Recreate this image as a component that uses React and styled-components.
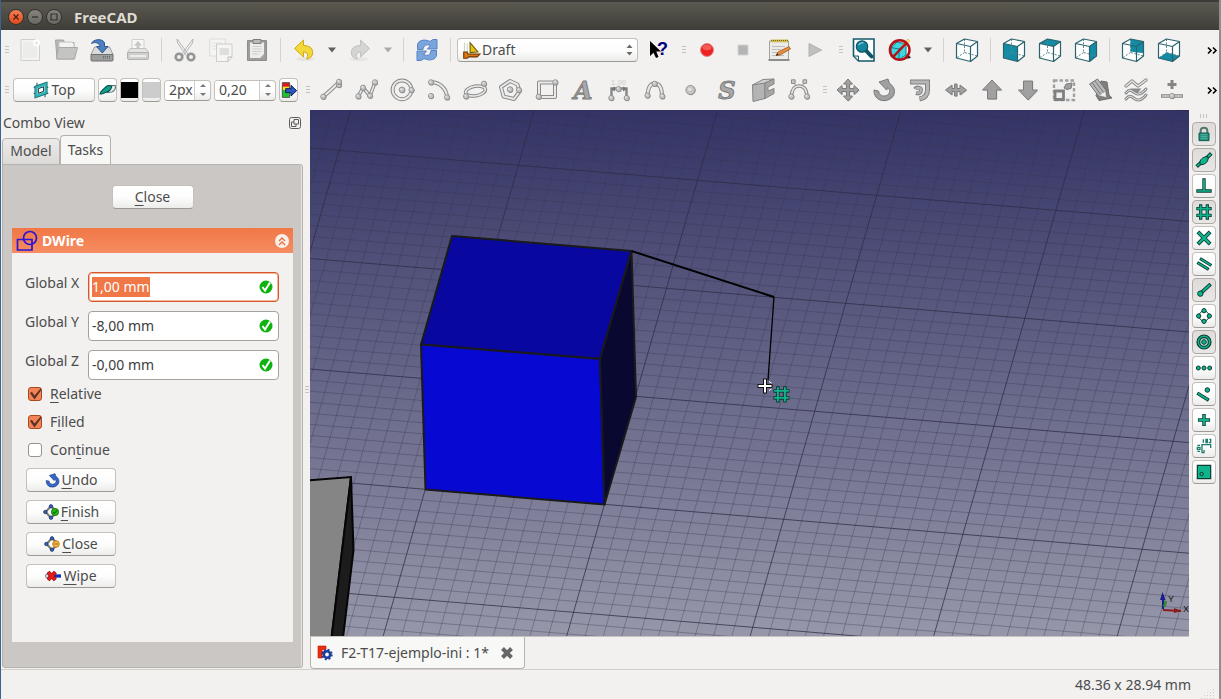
import React, { useEffect, useRef } from 'react'
import styled, { createGlobalStyle, css } from 'styled-components'

const GlobalStyle = createGlobalStyle`
* {
    box-sizing: border-box;
}
body {
    margin: 0;
    background: #f2f1f0;
    color: #4c4c4c;
    font-family: "Noto Sans", "Open Sans", sans-serif;
    font-size: 14px;
    line-height: 20px;
}
button, input, select {
    font: inherit;
    color: inherit;
    margin: 0;
    padding: 0;
}
svg {
    display: block;
    flex: none;
    overflow: visible;
}
u {
    text-underline-offset: 3px;
}
`

/* ---------- toolbar icons ---------- */

const Icon = ({ size = 24, children }) => (
  <svg width={size} height={size} viewBox="0 0 24 24" fill="none" aria-hidden="true">{children}</svg>
)

const Tube = ({ d, w = 4 }) => (
  <g strokeLinejoin="round" strokeLinecap="round">
    <path d={d} stroke="#8b8b8b" strokeWidth={w} />
    <path d={d} stroke="#e9e9e9" strokeWidth={w - 2} />
  </g>
)
const Node = ({ x, y, r = 2.6 }) => (
  <g>
    <circle cx={x + 0.5} cy={y + 0.6} r={r} fill="#8f8f8f" />
    <circle cx={x} cy={y} r={r} fill="#c3c3c3" stroke="#8a8a8a" strokeWidth="0.8" />
    <circle cx={x - 0.7} cy={y - 0.7} r={r / 2.6} fill="#e2e2e2" />
  </g>
)
const Solid = ({ d }) => (
  <g strokeLinejoin="round">
    <path d={d} transform="translate(0.8 0.8)" fill="#c4c4c4" />
    <path d={d} fill="#a0a0a0" stroke="#7c7c7c" />
  </g>
)

const LineIcon = () => <Icon><Tube d="M4.3 18.7 20 4.5" /><Node x={20} y={7} /><Node x={20} y={3.8} /><Node x={4.3} y={18.7} /></Icon>
const WireIcon = () => (
  <Icon>
    <Tube d="M3.3 18.3 8 9.7l7 8 5-13.4" w={3.6} />
    <Node x={3.3} y={18.3} /><Node x={8} y={9.7} /><Node x={15} y={17.7} /><Node x={20} y={4.3} />
  </Icon>
)
const CircleIcon = () => <Icon><Tube d="M1.6 11.8a9.4 9.4 0 1 0 18.8 0a9.4 9.4 0 1 0 -18.8 0" /><Node x={11} y={11.8} r={2.8} /><Node x={20.5} y={12} /></Icon>
const ArcIcon = () => <Icon><Tube d="M4 4.3C13 4 19.5 11 20 19" /><Node x={4} y={4.3} /><Node x={4} y={18} /><Node x={20} y={19.3} /></Icon>
const EllipseIcon = () => (
  <Icon>
    <g transform="rotate(-10 12.5 13)"><Tube d="M2.5 13a10 4.8 0 1 0 20 0a10 4.8 0 1 0 -20 0" w={3.6} /></g>
    <Node x={3} y={18.3} /><Node x={21} y={5.7} />
  </Icon>
)
const PolygonIcon = () => <Icon><Tube d="M11 3 2 9l2.6 9.5L15 21l5.5-7.5-2-7z" /><Node x={11} y={11.5} r={2.8} /><Node x={20} y={12} /></Icon>
const RectIcon = () => <Icon><Tube d="M4 4.5H20V19H4z" /><Node x={20.3} y={4.3} /><Node x={3.7} y={18.7} /></Icon>

const GlyphText = styled.text`
font-family: "DejaVu Serif", serif;
font-weight: bold;
font-style: italic;
font-size: 24px;
`
const TinyText = styled.text`
font-family: "Liberation Sans", sans-serif;
font-weight: bold;
font-size: ${p => p.$size || 8}px;
`
const LetterIcon = ({ letter }) => (
  <Icon>
    <GlyphText x="12" y="21" textAnchor="middle" fill="#a8a8a8" stroke="#7c7c7c">{letter}</GlyphText>
  </Icon>
)
const DimIcon = () => (
  <Icon>
    <path d="M4.5 20v-9.5H19.5V20" stroke="#858585" strokeWidth="2.4" />
    <path d="m4 11 4-2.5v5zM20 11l-4-2.5v5z" fill="#777" />
    <TinyText x="11.5" y="7" textAnchor="middle" fill="#d8d8d8">1.00</TinyText>
    <Node x={11.5} y={11} /><Node x={4.3} y={20} /><Node x={19.7} y={20} />
  </Icon>
)
const SplineIcon = () => <Icon><Tube d="M4.5 17.5C5 7 9 5.500 11.7 5.500S19 7 19 18" /><Node x={4.5} y={17.5} /><Node x={11.7} y={5.8} /><Node x={19.3} y={18.3} /></Icon>
const PointIcon = () => <Icon><Node x={11.5} y={12} r={4.6} /></Icon>
const FacebinderIcon = () => (
  <Icon>
    <path d="M1.500 7 14 3v17.500L2 23.500z" fill="#b4b4b4" stroke="#858585" />
    <path d="M1.500 7 12 1.500 23 1l-9 4z" fill="#cfcfcf" stroke="#858585" />
    <path d="M14 5 23 1v5l-6 3v4l6-2.500v5l-9 5z" fill="#a6a6a6" stroke="#858585" strokeLinejoin="round" />
  </Icon>
)
const BezierIcon = () => (
  <Icon>
    <path d="M6.300 3.500 9 8M17.700 3.500 15 8" stroke="#999" />
    <Tube d="M4.300 18C5 10 8 8 12 8s7.500 2 8 10" w={3.6} />
    <path d="M4.500 1.800h3.600v3.600H4.500zM16 1.800h3.600v3.600H16z" fill="#c9c9c9" stroke="#8a8a8a" />
    <Node x={4.3} y={18.5} /><Node x={20} y={18.5} />
  </Icon>
)
const MoveIcon = () => <Icon><Solid d="m12 1 4.500 5h-3v4.500H18v-3l5 4.500-5 4.500v-3h-4.500V18h3L12 23l-4.500-5h3v-4.500H6v3L1 12l5-4.500v3h4.500V6h-3z" /></Icon>
const TURN = 'M7 4 16 1l1.500 4.500C22 8 23.500 13 21.500 17 18 23.500 8 24.500 4 19 2.500 17 1.800 14.500 2 12l4.500 1c.5 4 4.500 6 8 4.500 4-1.700 4-6 1-8L14.500 12z'
const RotateIcon = () => <Icon><Solid d={TURN} /></Icon>
const OffsetIcon = () => (
  <Icon>
    <path d="M2 4h17.500V12c0 5-3 8-8 9" stroke="#808080" strokeWidth="5" />
    <path d="M7 11c1-2 6-2 6 1 0 2.500-2 4-5 3" stroke="#808080" strokeWidth="4" />
    <path d="M2.800 4h16.700V12c0 5-3 7.800-7.400 8.800" stroke="#b6b6b6" strokeWidth="3" />
    <path d="M7.500 10.800c1-1.600 5.500-1.500 5.500 1.200 0 2.300-2 3.700-4.400 3" stroke="#b6b6b6" strokeWidth="2" />
  </Icon>
)
const TrimexIcon = () => <Icon><Solid d="M1.500 12 8 7v3.500h2.500V6H13v4.500h3V7l6.500 5-6.500 5v-3.500h-3V18h-2.500v-4.500H8V17z" /></Icon>
const UpIcon = () => <Icon><Solid d="m12 2 9.500 10h-5v9h-9v-9h-5z" /></Icon>
const DownIcon = () => <Icon><Solid d="m12 22 9.500-10h-5V3h-9v9h-5z" /></Icon>
const ScaleIcon = () => (
  <Icon>
    <path d="M2 2.500h20V22H2z" stroke="#a0a0a0" strokeWidth="2.400" strokeDasharray="3.500 2" />
    <path d="M3 13h8.500v8.500H3z" fill="#ececec" stroke="#808080" strokeWidth="2.800" />
    <Solid d="m12 10 2-4 6-1-1 5-4 1.500z" />
  </Icon>
)
const EditIcon = () => (
  <Icon>
    <path d="M13 3l6 1 2 13 3 3-13 2.500-3-5z" fill="#808080" stroke="#6f6f6f" strokeLinejoin="round" />
    <path d="M1.500 6 9.500 1l9 12v6.500L10.500 18z" fill="#b8b8b8" stroke="#777" />
    <path d="m4 4.500 9 12.500M7 3l9 12" stroke="#777" />
    <path d="m10.500 17.500 7-4.500 1 6.500z" fill="#efefef" stroke="#888" strokeWidth="0.600" />
  </Icon>
)
const WireSplineIcon = () => (
  <Icon>
    <Tube d="m2 8 6-5 6 5 8-6" w={3.4} />
    <path d="M6.500 10.500h11L12 17z" fill="#8a8a8a" />
    <Tube d="M2 15c4-5 6-2 9 0s7 1 11-4M2 21c4-5 6-2 9 0s7 1 11-4" w={3} />
  </Icon>
)
const AddPointIcon = () => (
  <Icon>
    <path d="M12 2v9M7.500 6.500h9" stroke="#858585" strokeWidth="3" />
    <path d="M1 18h22" stroke="#8b8b8b" strokeWidth="3.600" />
    <path d="M2 18h20" stroke="#d5d5d5" strokeWidth="1.400" />
    <Node x={12} y={18} />
  </Icon>
)

const NewIcon = () => (
  <Icon>
    <path d="M3 1.500h14l4.500 4V22.500H3z" fill="#f3f3f2" stroke="#cfcfcd" />
    <path d="M5 4h11l3 3v13H5z" fill="#ececea" />
    <circle cx="18.500" cy="5" r="3.500" fill="#fff" /><circle cx="18.500" cy="5" r="1.500" fill="#e4e4e2" />
  </Icon>
)
const OpenIcon = () => (
  <Icon>
    <path d="M1.500 2h8l1 2.500H20V21H3z" fill="#b7b7b6" stroke="#a5a5a4" />
    <path d="M5 4h13l2 2v8H5z" fill="#f4f4f4" stroke="#c4c4c4" />
    <path d="M4.500 9.500h19L20.500 21H2.500z" fill="#c4c4c3" stroke="#a9a9a8" strokeLinejoin="round" />
  </Icon>
)
const SaveIcon = () => (
  <Icon>
    <path d="M4.500 9h15L23 16.500H1z" fill="#dcdcdc" stroke="#9b9b9b" />
    <path d="M1 16.500h22v5.500a1 1 0 0 1-1 1H2a1 1 0 0 1-1-1z" fill="#9d9f9f" stroke="#6e7070" />
    <path d="M13 20h8M13 18.500h8" stroke="#666" strokeDasharray="1 1" />
    <path d="M1.500 5.500C3 1 13 0 14.500 5v3.500H18L12.300 15 6.500 8.500H10C9.500 5 5 3.500 1.500 5.500z" fill="#4d7fbf" stroke="#2c5a98" />
  </Icon>
)
const PrintIcon = () => (
  <Icon>
    <path d="M6 1.500h12V13H6z" fill="#f7f7f6" stroke="#cfcfce" />
    <path d="m12 3 4 4.500h-2.500V11h-3V7.500H8z" fill="#c6c6c5" />
    <path d="M4 10.500h16l2.500 4H1.500z" fill="#e3e3e2" stroke="#c2c2c1" />
    <path d="M1.500 14.500h21v5.500a1.500 1.500 0 0 1-1.500 1.500H3A1.500 1.500 0 0 1 1.500 20z" fill="#cfcfce" stroke="#b1b1b0" />
    <path d="M4 18h16" stroke="#f5f5f5" strokeWidth="1.600" />
  </Icon>
)
const CutIcon = () => (
  <Icon>
    <path d="M4 1 15.500 16.500l-2 1L4.500 5zM20 1 8.500 16.500l2 1L19.500 5z" fill="#f1f1f1" stroke="#b5b5b5" />
    <circle cx="6" cy="19" r="3.300" stroke="#959595" strokeWidth="2.600" />
    <circle cx="18" cy="19" r="3.300" stroke="#959595" strokeWidth="2.600" />
  </Icon>
)
const CopyIcon = () => (
  <Icon>
    <path d="M.8 1h15.500v17H.8z" fill="#f5f5f4" stroke="#dbdbd9" />
    <path d="M3 5h10M3 8h4M3 11h4" stroke="#e0e0de" />
    <path d="M7.500 6H23v13l-4 4.500H7.500z" fill="#f5f5f4" stroke="#cdcdcb" />
    <path d="M10.500 10h9.500v7h-9.500z" fill="#dededc" /><path d="M19 23.500V19h4" stroke="#bbb" />
  </Icon>
)
const PasteIcon = () => (
  <Icon>
    <path d="M2.500 2.500h19v20h-19z" fill="#9d9d9c" stroke="#8d8d8c" strokeLinejoin="round" />
    <path d="M5 4.500h14v15.500H5z" fill="#ececeb" />
    <path d="M7.500 8.500h9M7.500 11h9M7.500 13.500h9M7.500 16h6" stroke="#cfcfce" />
    <path d="M8 1.500h8v4H8z" fill="#b9b9b8" stroke="#7d7d7c" />
    <path d="M19 16v4h-4z" fill="#a4a4a3" />
  </Icon>
)
const UndoIcon = () => (
  <Icon>
    <ellipse cx="13" cy="21" rx="9" ry="2" fill="#e6e5e3" />
    <path d="M11.500 2v5.500c7 0 10 4 9 8.500-.6 3-3 4.800-6 5 2.500-4 1-7-3-7v5L2.500 10.500z" fill="#f3d73b" stroke="#d0a90c" strokeLinejoin="round" />
  </Icon>
)
const RedoIcon = () => (
  <Icon>
    <ellipse cx="11" cy="21" rx="9" ry="2" fill="#e6e5e3" />
    <path d="M12.500 2v5.500c-7 0-10 4-9 8.500.6 3 3 4.800 6 5-2.500-4-1-7 3-7v5L21.500 10.500z" fill="#d5d5d4" stroke="#c0c0bf" strokeLinejoin="round" />
  </Icon>
)
const RefreshIcon = () => (
  <Icon>
    <path d="M2.500 11.500V7C3 2.500 9 .5 15 3.500L18 1.500h4v9.500h-9.500l3-3.500C11 5.500 8.500 8 8 11.500z" fill="#7ba6dd" stroke="#5583c4" strokeLinejoin="round" />
    <path d="M21.500 12.500V17c-.5 4.500-6.500 6.500-12.500 3.500L6 22.500H2V13h9.500l-3 3.500c4.500 2 7 .500 7.500-4z" fill="#7ba6dd" stroke="#5583c4" strokeLinejoin="round" />
  </Icon>
)
const WhatsThisIcon = () => (
  <Icon>
    <path d="M4 3v15l3.500-3.300L10 20l2.500-1-2.200-5.500h4.700z" fill="#000" />
    <TinyText x="11" y="17" $size={18} fill="#00007c">?</TinyText>
  </Icon>
)
const RecordIcon = () => (
  <Icon>
    <circle cx="12" cy="12" r="6.500" fill="#ef2020" stroke="#d98d8d" />
    <ellipse cx="12" cy="9.500" rx="4.500" ry="2.800" fill="#f65a55" />
  </Icon>
)
const StopIcon = () => <Icon><path d="M7 7h10v10H7z" fill="#b4b4b4" stroke="#d3d3d3" /></Icon>
const MacroIcon = () => (
  <Icon>
    <path d="M2.500 3h19v19h-19z" fill="#ebebe9" stroke="#a3a39e" />
    <path d="M1.500 21h21v2h-21z" fill="#8e8e88" />
    <path d="M4 1.500h17v2.800H4z" fill="#cdbb4f" /><path d="M4 2.500h17" stroke="#7b6d1b" strokeDasharray="1 1" />
    <path d="M5 8.500h13M5 11.500h9M5 14.500h6M5 17.500h12" stroke="#bcbcb8" />
    <path d="M9 17.500 11 14l11-5.500 1.500 2.500-10.500 6z" fill="#ea8d3c" stroke="#8a4f1b" strokeWidth="0.700" />
    <path d="m9 17.500 1.200-2.200 1.500 1.700z" fill="#222" />
  </Icon>
)
const PlayIcon = () => <Icon><path d="M6 5.500 18.500 12 6 18.500z" fill="#c0c0c0" stroke="#b0b0b0" /></Icon>
const FitIcon = () => (
  <Icon>
    <path d="M1.500 1h20.500v22H6.500l-5-5z" fill="#fff" stroke="#14596b" strokeWidth="1.600" />
    <path d="M1.500 18h5v5z" fill="#dce8ea" stroke="#14596b" />
    <path d="m13.500 12 6 6.500" stroke="#0f5567" strokeWidth="4" strokeLinecap="round" />
    <circle cx="10" cy="8.500" r="5.700" fill="#1586a0" stroke="#0f5567" strokeWidth="1.200" />
    <path d="M6.500 7c1.500-2 3.500-2.500 5-2" stroke="#7fc4d3" strokeWidth="1.500" />
  </Icon>
)
const DrawStyleIcon = () => (
  <Icon>
    <path d="m16 21 7-1-3-4z" fill="#222" />
    <path d="M3 9.500 9 4l9 2v11l-7 4.500-8-3z" fill="#3fd7df" stroke="#117a86" />
    <path d="m3 9.500 8 1.500 7-5M11 11v10" stroke="#117a86" />
    <path d="m13 9 7-8 2 2-7 7z" fill="#ffe97a" stroke="#d7a13c" strokeWidth="0.600" />
    <circle cx="11.700" cy="12" r="9.800" stroke="#b41218" strokeWidth="2.500" />
    <path d="M18.500 5 5 19" stroke="#b41218" strokeWidth="2.500" />
  </Icon>
)
const faces = {
  front: 'M1.500 5.500 15.500 8.500v15L1.500 20z',
  top: 'M1.500 5.500 9.500 1l13 2.500-7 5z',
  right: 'M15.500 8.500 22.500 3.500V18l-7 5.500z',
  rear: 'M9.500 1l13 2.500V15l-7-.5-6-1z',
  bottom: 'M1.500 20 9.500 14.500l13 3.500-7 5.500z',
}
const CubeIcon = ({ face }) => (
  <Icon>
    <path d="M1.500 5.500 9.500 1l13 2.500V18l-7 5.500L1.500 20z" fill="#fff" />
    {face && <path d={faces[face]} fill="#128ba5" />}
    <path d="M9.500 1v13.500l13 3.500M9.500 14.500 1.500 20" stroke="#5b8790" strokeDasharray="2 1.500" />
    <path d="M1.500 5.500 9.500 1l13 2.500V18l-7 5.500L1.500 20zM1.500 5.500l14 3 7-5M15.500 8.500v15" stroke="#2b626c" strokeWidth="1.200" strokeLinejoin="round" />
  </Icon>
)

/* ---------- small widget icons ---------- */

const PlaneIcon = () => (
  <Icon size={16}>
    <path d="M1 8h22M1 17h22M6 1v22M18 1v22" stroke="#2a5559" strokeWidth="1.500" />
    <path d="M5 8 19 3v13L5 21z" fill="#fff" stroke="#0f4d52" strokeWidth="5.500" />
    <path d="M5 8 19 3v13L5 21z" fill="#fff" stroke="#25b5bb" strokeWidth="3.500" />
    <path d="M8 10 16 7v7l-8 3z" fill="#fff" stroke="#0c2c2f" strokeWidth="1.500" />
  </Icon>
)
const ConstructionIcon = () => (
  <Icon size={17}>
    <path d="M12 15 18 5h5c1 4-1 8-5 9z" fill="#e8eeee" stroke="#5a7672" strokeWidth="1.500" />
    <path d="M1.500 17C2 12 8 9 10 6.500c2-2 7-2 8 0-1 4-4 7-8 8-3 .5-3 3-8.500 2.500z" fill="#10a08d" stroke="#0a4a43" strokeWidth="1.500" />
  </Icon>
)
const ApplyIcon = () => (
  <Icon size={16}>
    <path d="M2 1h11v8H2z" fill="#e01a1a" /><path d="M2 7h11v6H2z" fill="#f2e21c" />
    <path d="M2 12h11v11H2z" fill="#19c828" /><path d="M2 1h11v22H2z" stroke="#555" strokeWidth="1.500" />
    <path d="M7 10h8V5l8.500 8-8.500 8v-5H7z" fill="#2c57bf" stroke="#0c1f59" strokeWidth="1.500" />
  </Icon>
)
const BoatIcon = () => (
  <Icon size={17}>
    <path d="M2 1v17M6 2v16" stroke="#b9b9a4" /><path d="M10 15V1l11 13z" fill="#e8c311" stroke="#6d5a05" strokeWidth="1.500" />
    <path d="M1 14h5l1 3h17l-4 4H8l-2 2H1z" fill="#d9780f" stroke="#6a3704" strokeWidth="1.500" />
  </Icon>
)
const SortArrows = () => (
  <svg width="7" height="12" viewBox="0 0 7 12" aria-hidden="true"><path d="m.5 4 3-3.500 3 3.500zM.5 8l3 3.500 3-3.500z" fill="#6a6a6a" /></svg>
)
const Caret = ({ up, color = '#7a7a7a' }) => (
  <svg width="6" height="3" viewBox="0 0 6 3" aria-hidden="true"><path d={up ? 'M0 3 3 0l3 3z' : 'M0 0h6L3 3z'} fill={color} /></svg>
)
const DropCaret = ({ dim }) => (
  <svg width="8" height="6" viewBox="0 0 8 6" aria-hidden="true"><path d="M0 .5h8L4 5.500z" fill={dim ? '#aaa' : '#606060'} /></svg>
)
const ValidIcon = () => (
  <svg width="14" height="14" viewBox="0 0 14 14" fill="none" aria-hidden="true">
    <circle cx="7" cy="7" r="6.500" fill="#0fb20f" />
    <path d="m3.500 7 2.500 3.500 5-8" stroke="#fff" strokeWidth="2" />
  </svg>
)
const SketchIcon = () => (
  <svg width="22" height="22" viewBox="0 0 22 22" fill="none" stroke="#2a16d8" strokeWidth="1.700" aria-hidden="true">
    <path d="M1.500 9.500H16V20H1.500z" /><circle cx="14" cy="8" r="6.500" />
  </svg>
)
const CollapseIcon = () => (
  <svg width="14" height="14" viewBox="0 0 14 14" fill="none" aria-hidden="true">
    <circle cx="7" cy="7" r="7" fill="#f7efe9" /><path d="m4 7 3-3 3 3M4 11l3-3 3 3" stroke="#e8713f" strokeWidth="1.400" />
  </svg>
)
const FloatIcon = () => (
  <svg width="12" height="12" viewBox="0 0 12 12" fill="none" stroke="#5c5c5c" aria-hidden="true">
    <rect x=".5" y=".5" width="11" height="11" rx="2" /><path d="M5 2.500h4.500V7H5zM7 7v2.500H2.500V5H5" />
  </svg>
)
const UndoBlueIcon = () => <Icon size={15}><path d={TURN} fill="#3568cf" stroke="#12306f" strokeLinejoin="round" /></Icon>
const NodesBase = () => (
  <g>
    <path d="M12 3 4 12l8 9M12 3l7 7M12 21l7-7" stroke="#777" strokeWidth="3" />
    <g fill="#3463c4" stroke="#0d2356"><circle cx="12" cy="3.500" r="2.600" /><circle cx="3.500" cy="12" r="2.600" /><circle cx="12" cy="20.500" r="2.600" /></g>
  </g>
)
const FinishIcon = () => <Icon size={16}><NodesBase /><circle cx="18" cy="12" r="5.500" fill="#22b813" stroke="#0c6105" /><path d="m15 12 2 2.500 4-5" stroke="#0b4a06" strokeWidth="1.500" /></Icon>
const CloseWireIcon = () => <Icon size={16}><NodesBase /><circle cx="18" cy="12" r="5" fill="#ffd98a" stroke="#8a5200" /><circle cx="18" cy="12" r="3.800" stroke="#ef9412" strokeWidth="2" /><path d="M15.500 12h5" stroke="#7a4800" strokeWidth="1.500" /></Icon>
const WipeIcon = () => (
  <Icon size={16}>
    <path d="M9 12h15" stroke="#1431b5" strokeWidth="5" /><circle cx="3" cy="12" r="2.500" fill="#ddd" stroke="#555" />
    <path d="m4.500 6 11 12M15.500 6l-11 12" stroke="#8e0d0d" strokeWidth="6" />
    <path d="m5 6.500 10 11M15 6.500l-10 11" stroke="#ee1b1b" strokeWidth="4" />
  </Icon>
)
const AppIcon = () => (
  <svg width="16" height="16" viewBox="0 0 16 16" fill="none" aria-hidden="true">
    <path d="M1 1h8v3.500H5V6.500h3V9H5v4H1z" fill="#ef2b0b" stroke="#b41c04" strokeWidth="0.600" />
    <circle cx="10" cy="9.500" r="3.200" stroke="#1d3c9c" strokeWidth="2.600" />
    <circle cx="10" cy="9.500" r="4.900" stroke="#1d3c9c" strokeWidth="1.600" strokeDasharray="2 1.850" />
  </svg>
)
const TabCloseIcon = () => (
  <svg width="14" height="14" viewBox="0 0 14 14" aria-hidden="true"><path d="m2.500 2.500 9 9M11.500 2.500l-9 9" stroke="#666" strokeWidth="4" /></svg>
)
const Overflow = () => (
  <svg width="10" height="7" viewBox="0 0 10 7" fill="none" stroke="#000" strokeWidth="1.600" aria-hidden="true"><path d="m1 .5 3 3-3 3M6 .5l3 3-3 3" /></svg>
)

/* ---------- snap icons: dark outline under a green stroke ---------- */

const Snap = ({ d, w = 4 }) => (
  <g strokeLinecap="square" strokeLinejoin="miter">
    <path d={d} stroke="#0b3b33" strokeWidth={w + 2.4} />
    <path d={d} stroke="#10b48c" strokeWidth={w} />
  </g>
)
const Dot = ({ x, y, r = 3 }) => <circle cx={x} cy={y} r={r} fill="#10b48c" stroke="#0b3b33" strokeWidth="1.500" />
const GRID = 'M7 3v18M17 3v18M3 7h18M3 17h18'

const snaps = [
  { name: 'Toggle snap', on: true, art: <g><path d="M7 11V7c0-6 10-6 10 0v4" stroke="#56756f" strokeWidth="3" /><path d="M4.500 10.500h15V22h-15z" fill="#1c8f78" stroke="#14584d" strokeWidth="1.500" /><path d="M7 13h10M7 16h10M7 19h10" stroke="#7fc4b5" /></g> },
  { name: 'Near', on: true, art: <g><Snap d="M3 20 7 16M17 8l4-4" w={3} /><path d="M6 16c0-5 4-8 9-9h3v3c0 5-4 8-9 9H6z" fill="#10b48c" stroke="#0b3b33" strokeWidth="1.500" /></g> },
  { name: 'Perpendicular', art: <Snap d="M12 3v16M3 19.500h18" w={2.6} /> },
  { name: 'Grid', on: true, art: <Snap d={GRID} w={2.6} /> },
  { name: 'Intersection', art: <Snap d="m5 5 14 14M19 5 5 19" w={3.6} /> },
  { name: 'Parallel', art: <Snap d="m4 11 13 8M8 5l13 8" w={2.4} /> },
  { name: 'Endpoint', on: true, art: <g><Snap d="M8 16 20 5" w={3} /><Dot x={6.5} y={17.5} r={4} /></g> },
  { name: 'Angle', art: <g><circle cx="12" cy="12" r="7.500" stroke="#0b3b33" strokeWidth="1.500" /><Dot x={12} y={4} r={3.2} /><Dot x={4} y={12} r={3.2} /><Dot x={20} y={12} r={3.2} /><Dot x={12} y={20} r={3.2} /></g> },
  { name: 'Center', on: true, art: <g><circle cx="12" cy="12" r="10.500" fill="#10b48c" stroke="#0b3b33" strokeWidth="1.800" /><circle cx="12" cy="12" r="6.500" fill="#cfe5e0" stroke="#0b3b33" strokeWidth="1.800" /><Dot x={12} y={12} r={3.5} /></g> },
  { name: 'Extension', art: <g><Dot x={3.5} y={12} /><Dot x={12} y={12} /><Dot x={20.5} y={12} /></g> },
  { name: 'Midpoint', art: <g><Snap d="m4 12 13 8" w={2.6} /><Dot x={17} y={6} r={3.4} /></g> },
  { name: 'Ortho', art: <Snap d="M12 5.500v13M5.500 12h13" w={2.8} /> },
  { name: 'Dimensions', art: <g stroke="#1f7c6b" strokeWidth="2"><path d="M9 21V10h13v5M12 21v-3M9 10v12h4" /><path d="M11 2v5M15 2h2v5h-2zM20 2h2v5h-3M2 11h4M2 14h4v3H2zM2 20h4" /></g> },
  { name: 'Working plane', art: <g><path d="M2 2h20v20H2z" fill="#10b48c" stroke="#0b3b33" strokeWidth="1.800" /><circle cx="8.500" cy="15" r="2.600" stroke="#0b3b33" strokeWidth="1.500" /></g> },
]

/* ---------- layout ---------- */

const raised = css`
background: linear-gradient(#ffffff, #fdfdfd 50%, #ececeb);
border: 1px solid #c4c0bc;
border-bottom-color: #9d9995;
border-radius: 4px;
`
const Window = styled.div`
min-height: 100vh;
display: flex;
flex-direction: column;
border-left: 1px solid #39648f;
border-right: 2px solid #8f8e8c;
`
const TitleBar = styled.header`
display: flex;
align-items: center;
gap: 3px;
height: 30px;
padding: 3px 7px 0;
background: linear-gradient(#3c3b37 2px, #5b5950 2px, #3e3d38);
`
const WindowButton = styled.button`
display: grid;
place-items: center;
width: 16px;
height: 16px;
border: 1px solid #33322d;
border-radius: 50%;
background: ${p => p.$close ? 'linear-gradient(#f37e56, #de4b1d)' : 'linear-gradient(#85837b, #6a6860)'};
`
const AppTitle = styled.h1`
margin: 0 0 0 9px;
font-size: 15px;
line-height: 20px;
font-weight: bold;
color: #dfdbd2;
`
const ToolRow = styled.div`
display: flex;
align-items: center;
gap: 2px;
height: 40px;
`
const ToolGroup = styled.div`
display: flex;
align-items: center;
`
const Handle = styled.span`
flex: none;
width: 4px;
height: 8px;
margin: 0 3px 0 4px;
background: repeating-linear-gradient(#c6c3bf 0 1px, transparent 1px 3px);
`
const ToolButton = styled.button`
display: grid;
place-items: center;
width: 36px;
height: 36px;
border: none;
background: none;
`
const DropButton = styled(ToolButton)`
width: 20px;
`
const Separator = styled.span`
width: 1px;
height: 24px;
margin: 0 5px;
background: #d6d3cf;
`
const OverflowButton = styled(ToolButton)`
width: 14px;
margin-left: auto;
`
const Workbench = styled.label`
${raised}
display: flex;
align-items: center;
width: 181px;
height: 24px;
margin: 0 2px 0 1px;
padding: 0 4px 0 5px;
select {
    flex: 1;
    min-width: 0;
    padding-left: 2px;
    border: none;
    background: none;
    appearance: none;
    line-height: 20px;
}
`
const DraftControls = styled.div`
display: flex;
align-items: center;
gap: 3px;
padding: 0 2px 0 1px;
`
const PlaneButton = styled.button`
${raised}
display: flex;
align-items: center;
justify-content: center;
gap: 3px;
width: 82px;
height: 24px;
line-height: 20px;
`
const SmallButton = styled.button`
${raised}
display: grid;
place-items: center;
width: 19px;
height: 24px;
`
const Swatch = styled.span`
width: 17px;
height: 16px;
background: ${p => p.$color};
`
const Spin = styled.div`
${raised}
display: flex;
width: ${p => p.$width}px;
height: 21px;
overflow: hidden;
input {
    flex: 1;
    min-width: 0;
    padding-left: 4px;
    border: none;
    border-right: 1px solid #d0cdc9;
    background: #fff;
    line-height: 18px;
    outline: none;
}
`
const Steps = styled.div`
display: flex;
flex-direction: column;
width: 15px;
button {
    flex: 1;
    display: grid;
    place-items: center;
    border: none;
    background: none;
}
`
const Main = styled.main`
flex: 1;
display: flex;
min-height: 0;
`
const Dock = styled.aside`
display: flex;
flex-direction: column;
width: 303px;
padding: 0 1px 1px;
`
const DockTitle = styled.div`
display: flex;
align-items: center;
justify-content: space-between;
height: 24px;
padding: 2px 2px 0 1px;
button {
    border: none;
    background: none;
}
`
const Tabs = styled.div`
display: flex;
align-items: flex-end;
height: 30px;
`
const Tab = styled.button`
height: ${p => p.$active ? 30 : 27}px;
width: ${p => p.$active ? 51 : 58}px;
margin-bottom: -1px;
padding-bottom: 2px;
border: 1px solid #b5b1ac;
border-bottom: ${p => p.$active ? 'none' : '1px solid #b5b1ac'};
border-radius: 4px 4px 0 0;
background: ${p => p.$active ? '#f7f7f6' : 'linear-gradient(#ecebea, #dcdad8)'};
line-height: 20px;
`
const TaskPanel = styled.div`
flex: 1;
display: flex;
flex-direction: column;
align-items: center;
padding: 20px 9px 25px;
border: 1px solid #b5b1ac;
border-radius: 0 3px 3px 3px;
box-shadow: inset -1px 0 #e4e2e0;
background: #cbc7c4;
`
const PushButton = styled.button`
${raised}
display: flex;
align-items: center;
justify-content: center;
gap: 2px;
width: ${p => p.$width}px;
height: 24px;
line-height: 20px;
`
const TaskBox = styled.section`
flex: 1;
align-self: stretch;
display: flex;
flex-direction: column;
margin-top: 19px;
background: #f2f1f0;
`
const TaskHeader = styled.div`
display: flex;
align-items: center;
gap: 4px;
height: 25px;
padding: 0 4px;
background: linear-gradient(#f07746, #f68d62);
color: #fff;
h2 {
    flex: 1;
    margin: 0;
    font-size: 14px;
    font-weight: bold;
}
button {
    border: none;
    background: none;
}
`
const TaskBody = styled.form`
display: flex;
flex-direction: column;
padding: 19px 14px 0 13px;
`
const Fields = styled.div`
display: grid;
grid-template-columns: 63px 1fr;
row-gap: 9px;
label {
    line-height: 22px;
}
`
const FieldBox = styled.div`
display: flex;
align-items: center;
min-width: 0;
height: 30px;
padding: 0 5px 0 3px;
border: 1px solid #a5a19c;
border-radius: 4px;
background: #fff;
&:focus-within {
    border-color: #d4582b;
    box-shadow: inset 0 0 0 1px #f6b79d;
}
input {
    flex: 1;
    min-width: 0;
    border: none;
    outline: none;
    background: none;
    line-height: 20px;
    color: #3c3c3c;
}
input::selection {
    background: #f07746;
    color: #fff;
}
`
const Check = styled.label`
display: flex;
align-items: center;
align-self: flex-start;
gap: 8px;
height: 28px;
padding-left: 3px;
input {
    appearance: none;
    display: grid;
    width: 14px;
    height: 14px;
    border: 1px solid #96928d;
    border-radius: 3px;
    background: #fff;
}
input:checked {
    border-color: #a8481f;
    background: #f28457;
}
input:checked::before {
    content: "";
    background: #5b3324;
    clip-path: polygon(8% 42%, 24% 32%, 46% 62%, 100% 0, 100% 20%, 46% 96%);
}
`
const Actions = styled.div`
display: flex;
flex-direction: column;
gap: 8px;
padding: 4px 0 0 1px;
`
const Splitter = styled.div`
display: flex;
align-items: center;
justify-content: center;
width: 6px;
span {
    width: 4px;
    height: 8px;
    background: repeating-linear-gradient(#c6c3bf 0 1px, transparent 1px 3px);
}
`
const Document = styled.section`
flex: 1;
display: flex;
flex-direction: column;
min-width: 0;
`
const Canvas = styled.svg`
flex: 1 1 0;
width: 100%;
min-height: 0;
overflow: hidden;
background: linear-gradient(#333365, #9797aa);
`
const AxisText = styled.text`
font-family: "Liberation Sans", sans-serif;
font-size: 9px;
fill: #111;
`
const DocTabs = styled.div`
height: 33px;
border-top: 1px solid #c5c2bf;
`
const DocTab = styled.div`
display: flex;
align-items: center;
width: 215px;
height: 32px;
padding: 0 10px 0 6px;
border: 1px solid #b5b1ac;
border-top: none;
border-radius: 0 0 4px 4px;
background: #f8f8f7;
span {
    margin-left: 8px;
    flex: 1;
}
button {
    border: none;
    background: none;
}
`
const SnapBar = styled.nav`
display: flex;
flex-direction: column;
align-items: center;
gap: 2px;
width: 30px;
padding-top: 4px;
`
const SnapHandle = styled.span`
width: 8px;
height: 4px;
margin-bottom: 2px;
background: repeating-linear-gradient(90deg, #c6c3bf 0 1px, transparent 1px 3px);
`
const SnapButton = styled.button`
${raised}
display: grid;
place-items: center;
width: 24px;
height: 24px;
${p => p.$on && 'background: linear-gradient(#dedbd9, #e9e7e5); border-color: #aeaaa6;'}
`
const StatusBar = styled.footer`
display: flex;
align-items: center;
justify-content: flex-end;
gap: 9px;
height: 30px;
padding: 0 3px 0 0;
border-top: 1px solid #d2cfcc;
`
const Grip = styled.span`
align-self: flex-end;
width: 16px;
height: 14px;
background: radial-gradient(circle, #cfccc8 1px, transparent 1px) 0 0 / 3px 3px;
clip-path: polygon(100% 0, 100% 100%, 0 100%);
`

/* ---------- 3D view ---------- */

const origin = [783.7, 519.3]
const axisU = [17.92, 1.5]
const axisV = [3.1, -10.8]

function gridLines(step, dir, major) {
  let d = ''
  for (let i = -90; i <= 90; i++) {
    if ((i % 10 === 0) !== major) continue
    const x = origin[0] + i * step[0]
    const y = origin[1] + i * step[1]
    d += `M${x - dir[0] * 90} ${y - dir[1] * 90}L${x + dir[0] * 90} ${y + dir[1] * 90}`
  }
  return d
}

const minorPath = gridLines(axisU, axisV, false) + gridLines(axisV, axisU, false)
const majorPath = gridLines(axisU, axisV, true) + gridLines(axisV, axisU, true)

function View3D() {
  return (
    <Canvas viewBox="310 110 879 526" preserveAspectRatio="xMidYMid slice" fill="none" role="img" aria-label="3D view">
      <path d={minorPath} stroke="#36364f" strokeOpacity="0.34" />
      <path d={majorPath} stroke="#2c2c46" strokeOpacity="0.75" />
      <g stroke="#1a1a1a" strokeWidth="2" strokeLinejoin="round">
        <path d="M452 236 631.500 251 600 359 421 344.500z" fill="#0808a0" />
        <path d="M421 344.500 600 359l4.500 145.500L425.500 489.500z" fill="#0808d3" />
        <path d="M631.500 251 636 397 604.500 504.500 600 359z" fill="#080830" />
      </g>
      <g stroke="#050505" strokeWidth="2">
        <path d="M308 480.300 351 477 331.500 638H308z" fill="#858585" />
        <path d="M351 477 353.500 550 343 638H331.500z" fill="#1c1c1c" />
      </g>
      <path d="M631.500 251 774 297" stroke="#000" strokeWidth="2" />
      <path d="M774 297 768 380" stroke="#000" strokeWidth="1.300" />
      <g transform="translate(765 386)">
        <path d="M0-7.500V7.500M-7.500 0H7.500" stroke="#111" strokeWidth="4" />
        <path d="M0-6.500V6.500M-6.500 0H6.500" stroke="#fff" strokeWidth="2" />
        <path d="m4-4.500 2.500 1.500M4 4.500 6.500 3" stroke="#fff" />
      </g>
      <g transform="translate(773 386) scale(0.7)"><Snap d={GRID} w={2.6} /></g>
      <path d="M1163 609v-14" stroke="#1c1c8c" strokeWidth="2" />
      <path d="m1160 600 2.500-8 3 8z" fill="#1c1c8c" />
      <path d="m1164 607 2-6" stroke="#2b8a2b" strokeWidth="2.500" />
      <path d="m1163 610 18 1" stroke="#8a1c1c" strokeWidth="2" />
      <path d="m1174 608 8 3-8 2z" fill="#8a1c1c" />
      <AxisText x="1168" y="602">Y</AxisText>
      <AxisText x="1183" y="612">X</AxisText>
    </Canvas>
  )
}

const tool = (name, art) => <ToolButton key={name} type="button" aria-label={name}>{art}</ToolButton>
const drop = (name, dim) => <DropButton type="button" aria-label={name}><DropCaret dim={dim} /></DropButton>

function SpinBox({ label, value, width }) {
  return (
    <Spin $width={width}>
      <input type="text" aria-label={label} defaultValue={value} />
      <Steps>
        <button type="button" aria-label={`Increase ${label}`}><Caret up /></button>
        <button type="button" aria-label={`Decrease ${label}`}><Caret /></button>
      </Steps>
    </Spin>
  )
}

function StandardTools() {
  return (
    <ToolRow>
      <ToolGroup>
        <Handle />
        {tool('New', <NewIcon />)}
        {tool('Open', <OpenIcon />)}
        {tool('Save', <SaveIcon />)}
        {tool('Print', <PrintIcon />)}
        <Separator />
        {tool('Cut', <CutIcon />)}
        {tool('Copy', <CopyIcon />)}
        {tool('Paste', <PasteIcon />)}
        <Separator />
        {tool('Undo', <UndoIcon />)}
        {drop('Undo history')}
        {tool('Redo', <RedoIcon />)}
        {drop('Redo history', true)}
        <Separator />
        {tool('Refresh', <RefreshIcon />)}
        <Separator />
        <Workbench>
          <BoatIcon />
          <select aria-label="Workbench" defaultValue="Draft"><option>Draft</option></select>
          <SortArrows />
        </Workbench>
        {tool("What's this", <WhatsThisIcon />)}
      </ToolGroup>
      <ToolGroup>
        <Handle />
        {tool('Record macro', <RecordIcon />)}
        {tool('Stop macro', <StopIcon />)}
        {tool('Macros', <MacroIcon />)}
        {tool('Run macro', <PlayIcon />)}
      </ToolGroup>
      <ToolGroup>
        <Handle />
        {tool('Fit all', <FitIcon />)}
        {tool('Draw style', <DrawStyleIcon />)}
        {drop('Draw styles')}
        <Separator />
        {tool('Axonometric', <CubeIcon />)}
        <Separator />
        {tool('Front', <CubeIcon face="front" />)}
        {tool('Top view', <CubeIcon face="top" />)}
        {tool('Right', <CubeIcon face="right" />)}
        <Separator />
        {tool('Rear', <CubeIcon face="rear" />)}
        {tool('Bottom', <CubeIcon face="bottom" />)}
      </ToolGroup>
      <OverflowButton type="button" aria-label="More tools"><Overflow /></OverflowButton>
    </ToolRow>
  )
}

function DraftTools() {
  return (
    <ToolRow>
      <ToolGroup>
        <Handle />
        <DraftControls>
          <PlaneButton type="button"><PlaneIcon />Top</PlaneButton>
          <SmallButton type="button" aria-label="Construction mode"><ConstructionIcon /></SmallButton>
          <SmallButton type="button" aria-label="Line color"><Swatch $color="#000" /></SmallButton>
          <SmallButton type="button" aria-label="Face color"><Swatch $color="#ccc" /></SmallButton>
          <SpinBox label="Line width" value="2px" width={47} />
          <SpinBox label="Font size" value="0,20" width={62} />
          <SmallButton type="button" aria-label="Apply style"><ApplyIcon /></SmallButton>
        </DraftControls>
      </ToolGroup>
      <ToolGroup>
        <Handle />
        {tool('Line', <LineIcon />)}
        {tool('DWire', <WireIcon />)}
        {tool('Circle', <CircleIcon />)}
        {tool('Arc', <ArcIcon />)}
        {tool('Ellipse', <EllipseIcon />)}
        {tool('Polygon', <PolygonIcon />)}
        {tool('Rectangle', <RectIcon />)}
        {tool('Text', <LetterIcon letter="A" />)}
        {tool('Dimension', <DimIcon />)}
        {tool('BSpline', <SplineIcon />)}
        {tool('Point', <PointIcon />)}
        {tool('ShapeString', <LetterIcon letter="S" />)}
        {tool('Facebinder', <FacebinderIcon />)}
        {tool('BezCurve', <BezierIcon />)}
      </ToolGroup>
      <ToolGroup>
        <Handle />
        {tool('Move', <MoveIcon />)}
        {tool('Rotate', <RotateIcon />)}
        {tool('Offset', <OffsetIcon />)}
        {tool('Trimex', <TrimexIcon />)}
        {tool('Upgrade', <UpIcon />)}
        {tool('Downgrade', <DownIcon />)}
        {tool('Scale', <ScaleIcon />)}
        {tool('Edit', <EditIcon />)}
        {tool('Wire to BSpline', <WireSplineIcon />)}
        {tool('Add point', <AddPointIcon />)}
      </ToolGroup>
      <OverflowButton type="button" aria-label="More draft tools"><Overflow /></OverflowButton>
    </ToolRow>
  )
}

function ComboView() {
  const first = useRef(null)

  useEffect(() => {
    first.current.focus()
    first.current.select()
  }, [])

  return (
    <Dock>
      <DockTitle>
        Combo View
        <button type="button" aria-label="Float panel"><FloatIcon /></button>
      </DockTitle>
      <Tabs role="tablist">
        <Tab type="button" role="tab" aria-selected="false">Model</Tab>
        <Tab type="button" role="tab" aria-selected="true" $active>Tasks</Tab>
      </Tabs>
      <TaskPanel>
        <PushButton type="button" $width={82}><span><u>C</u>lose</span></PushButton>
        <TaskBox>
          <TaskHeader>
            <SketchIcon />
            <h2>DWire</h2>
            <button type="button" aria-label="Collapse"><CollapseIcon /></button>
          </TaskHeader>
          <TaskBody>
            <Fields>
              <label htmlFor="gx">Global X</label>
              <FieldBox><input id="gx" ref={first} defaultValue="1,00 mm" /><ValidIcon /></FieldBox>
              <label htmlFor="gy">Global Y</label>
              <FieldBox><input id="gy" defaultValue="-8,00 mm" /><ValidIcon /></FieldBox>
              <label htmlFor="gz">Global Z</label>
              <FieldBox><input id="gz" defaultValue="-0,00 mm" /><ValidIcon /></FieldBox>
            </Fields>
            <Check><input type="checkbox" defaultChecked /><span><u>R</u>elative</span></Check>
            <Check><input type="checkbox" defaultChecked /><span>F<u>i</u>lled</span></Check>
            <Check><input type="checkbox" /><span>Con<u>t</u>inue</span></Check>
            <Actions>
              <PushButton type="button" $width={90}><UndoBlueIcon /><span><u>U</u>ndo</span></PushButton>
              <PushButton type="button" $width={90}><FinishIcon /><span><u>F</u>inish</span></PushButton>
              <PushButton type="button" $width={90}><CloseWireIcon /><span><u>C</u>lose</span></PushButton>
              <PushButton type="button" $width={90}><WipeIcon /><span><u>W</u>ipe</span></PushButton>
            </Actions>
          </TaskBody>
        </TaskBox>
      </TaskPanel>
    </Dock>
  )
}

function App() {
  return (
    <Window>
      <GlobalStyle />
      <TitleBar>
        <WindowButton type="button" aria-label="Close window" $close>
          <svg width="6" height="6" viewBox="0 0 6 6" stroke="#4a2012" strokeWidth="1.300"><path d="m.5.5 5 5M5.500.5l-5 5" /></svg>
        </WindowButton>
        <WindowButton type="button" aria-label="Minimize">
          <svg width="6" height="6" viewBox="0 0 6 6" stroke="#33322d" strokeWidth="1.300"><path d="M0 3h6" /></svg>
        </WindowButton>
        <WindowButton type="button" aria-label="Maximize">
          <svg width="8" height="8" viewBox="0 0 8 8" fill="none" stroke="#33322d" strokeWidth="1.200"><path d="M1 1h6v6H1z" /></svg>
        </WindowButton>
        <AppTitle>FreeCAD</AppTitle>
      </TitleBar>
      <StandardTools />
      <DraftTools />
      <Main>
        <ComboView />
        <Splitter><span /></Splitter>
        <Document>
          <View3D />
          <DocTabs>
            <DocTab>
              <AppIcon />
              <span>F2-T17-ejemplo-ini : 1*</span>
              <button type="button" aria-label="Close document"><TabCloseIcon /></button>
            </DocTab>
          </DocTabs>
        </Document>
        <SnapBar aria-label="Snap">
          <SnapHandle />
          {snaps.map(s => (
            <SnapButton key={s.name} type="button" aria-label={s.name} aria-pressed={!!s.on} $on={s.on}>
              <Icon size={16}>{s.art}</Icon>
            </SnapButton>
          ))}
        </SnapBar>
      </Main>
      <StatusBar>
        48.36 x 28.94 mm
        <Grip />
      </StatusBar>
    </Window>
  )
}

export default App
